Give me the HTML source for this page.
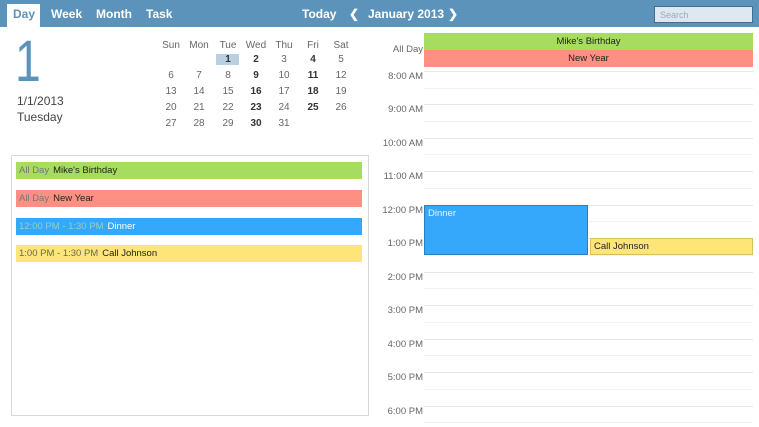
<!DOCTYPE html>
<html><head><style>
*{margin:0;padding:0;box-sizing:border-box}
body{width:759px;height:427px;background:#fff;font-family:"Liberation Sans",sans-serif;position:relative;overflow:hidden;color:#444}
.a{position:absolute;white-space:nowrap}
.hdr{position:absolute;left:0;top:0;width:759px;height:27px;background:#5b93bb}
.tab{position:absolute;top:7px;color:#fff;font-size:12px;font-weight:bold}
.cal{position:absolute;font-size:10px;color:#666;text-align:center;width:24px}
.b{font-weight:bold;color:#333}
.ln{position:absolute;left:424px;width:329px;height:1px;background:#e6e6e6}
.ln2{position:absolute;left:424px;width:329px;height:1px;background:#f2f2f2}
.tl{position:absolute;right:336px;font-size:9.5px;color:#666;text-align:right}
.ev{position:absolute;left:16px;width:346px;height:17px;font-size:9.5px;line-height:17px;padding-left:3px;color:#222}
.ev span{color:#777;margin-right:4px}
</style></head><body>
<div class="hdr"></div>
<div class="a" style="left:7px;top:4px;width:33px;height:23px;background:#fff"></div>
<div class="tab" style="left:13px;color:#5b93bb">Day</div>
<div class="tab" style="left:51px">Week</div>
<div class="tab" style="left:96px">Month</div>
<div class="tab" style="left:146px">Task</div>
<div class="tab" style="left:302px">Today</div>
<div class="tab" style="left:349px">&#10094;</div>
<div class="tab" style="left:368px">January 2013</div>
<div class="tab" style="left:448px">&#10095;</div>
<div class="a" style="left:654px;top:6px;width:99px;height:17px;background:#dde8f0;border:1px solid #3f6f90;font-size:9px;color:#9ab;padding:3px 5px">Search</div>

<div class="a" style="left:15px;top:33px;font-size:58px;color:#5b93bb;line-height:58px;transform:scaleX(0.8);transform-origin:left top">1</div>
<div class="a" style="left:17px;top:94px;font-size:12px;color:#444">1/1/2013</div>
<div class="a" style="left:17px;top:110px;font-size:12px;color:#444">Tuesday</div>

<div class="a" style="left:216px;top:54px;width:23px;height:11px;background:#b8d0e0"></div>
<div class="cal" style="left:159px;top:40px">Sun</div><div class="cal" style="left:187px;top:40px">Mon</div><div class="cal" style="left:216px;top:40px">Tue</div><div class="cal" style="left:244px;top:40px">Wed</div><div class="cal" style="left:272px;top:40px">Thu</div><div class="cal" style="left:301px;top:40px">Fri</div><div class="cal" style="left:329px;top:40px">Sat</div>
<div class="cal b" style="left:216px;top:54px">1</div><div class="cal b" style="left:244px;top:54px">2</div><div class="cal" style="left:272px;top:54px">3</div><div class="cal b" style="left:301px;top:54px">4</div><div class="cal" style="left:329px;top:54px">5</div>
<div class="cal" style="left:159px;top:70px">6</div><div class="cal" style="left:187px;top:70px">7</div><div class="cal" style="left:216px;top:70px">8</div><div class="cal b" style="left:244px;top:70px">9</div><div class="cal" style="left:272px;top:70px">10</div><div class="cal b" style="left:301px;top:70px">11</div><div class="cal" style="left:329px;top:70px">12</div>
<div class="cal" style="left:159px;top:86px">13</div><div class="cal" style="left:187px;top:86px">14</div><div class="cal" style="left:216px;top:86px">15</div><div class="cal b" style="left:244px;top:86px">16</div><div class="cal" style="left:272px;top:86px">17</div><div class="cal b" style="left:301px;top:86px">18</div><div class="cal" style="left:329px;top:86px">19</div>
<div class="cal" style="left:159px;top:102px">20</div><div class="cal" style="left:187px;top:102px">21</div><div class="cal" style="left:216px;top:102px">22</div><div class="cal b" style="left:244px;top:102px">23</div><div class="cal" style="left:272px;top:102px">24</div><div class="cal b" style="left:301px;top:102px">25</div><div class="cal" style="left:329px;top:102px">26</div>
<div class="cal" style="left:159px;top:118px">27</div><div class="cal" style="left:187px;top:118px">28</div><div class="cal" style="left:216px;top:118px">29</div><div class="cal b" style="left:244px;top:118px">30</div><div class="cal" style="left:272px;top:118px">31</div>

<div class="a" style="left:11px;top:155px;width:358px;height:261px;border:1px solid #d8d8d8"></div>
<div class="ev" style="top:162px;background:#a6dc60"><span>All Day</span>Mike's Birthday</div>
<div class="ev" style="top:190px;background:#fd9082"><span>All Day</span>New Year</div>
<div class="ev" style="top:218px;background:#35a8fb;color:#fff"><span style="color:#9cc">12:00 PM - 1:30 PM</span>Dinner</div>
<div class="ev" style="top:245px;background:#fde677"><span style="color:#666">1:00 PM - 1:30 PM</span>Call Johnson</div>

<div class="a" style="left:424px;top:33px;width:329px;height:17px;background:#a6dc60;font-size:9.5px;line-height:17px;text-align:center;color:#222">Mike's Birthday</div>
<div class="a" style="left:424px;top:50px;width:329px;height:17px;background:#fd9082;font-size:9.5px;line-height:17px;text-align:center;color:#222">New Year</div>
<div class="tl" style="top:44px">All Day</div>

<div class="ln" style="top:71px"></div><div class="ln2" style="top:88px"></div>
<div class="ln" style="top:104px"></div><div class="ln2" style="top:121px"></div>
<div class="ln" style="top:138px"></div><div class="ln2" style="top:154px"></div>
<div class="ln" style="top:171px"></div><div class="ln2" style="top:188px"></div>
<div class="ln" style="top:205px"></div><div class="ln2" style="top:221px"></div>
<div class="ln" style="top:238px"></div><div class="ln2" style="top:255px"></div>
<div class="ln" style="top:272px"></div><div class="ln2" style="top:288px"></div>
<div class="ln" style="top:305px"></div><div class="ln2" style="top:322px"></div>
<div class="ln" style="top:339px"></div><div class="ln2" style="top:355px"></div>
<div class="ln" style="top:372px"></div><div class="ln2" style="top:389px"></div>
<div class="ln" style="top:406px"></div><div class="ln2" style="top:422px"></div>
<div class="tl" style="top:71px">8:00 AM</div>
<div class="tl" style="top:104px">9:00 AM</div>
<div class="tl" style="top:138px">10:00 AM</div>
<div class="tl" style="top:171px">11:00 AM</div>
<div class="tl" style="top:205px">12:00 PM</div>
<div class="tl" style="top:238px">1:00 PM</div>
<div class="tl" style="top:272px">2:00 PM</div>
<div class="tl" style="top:305px">3:00 PM</div>
<div class="tl" style="top:339px">4:00 PM</div>
<div class="tl" style="top:372px">5:00 PM</div>
<div class="tl" style="top:406px">6:00 PM</div>

<div class="a" style="left:424px;top:205px;width:164px;height:50px;background:#35a8fb;border:1px solid #2a7fc0;color:#e8f4ff;font-size:9.5px;padding:2px 3px">Dinner</div>
<div class="a" style="left:590px;top:238px;width:163px;height:17px;background:#fde677;border:1px solid #d8c060;color:#222;font-size:9.5px;line-height:15px;padding-left:3px">Call Johnson</div>
</body></html>
